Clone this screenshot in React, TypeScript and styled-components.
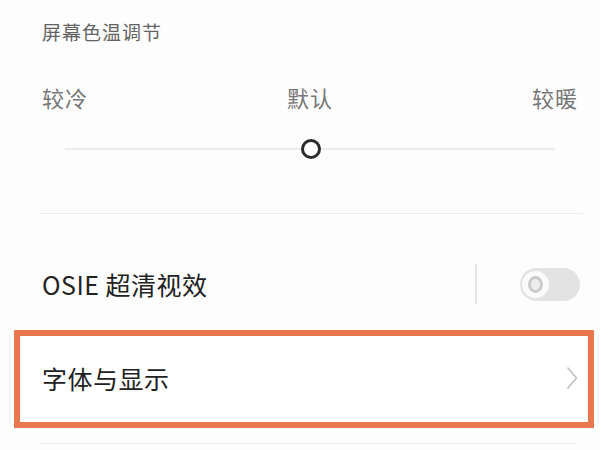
import styled, { createGlobalStyle } from 'styled-components';

const GlobalStyle = createGlobalStyle`
  html, body {
    margin: 0;
    padding: 0;
    background: #fdfdfd;
  }
  body {
    font-family: 'Noto Sans CJK SC', 'Noto Sans', sans-serif;
  }
`;

const Page = styled.div`
  width: 600px;
  height: 450px;
  overflow: hidden;
  background: #fdfdfd;
  display: flex;
  flex-direction: column;
`;

const TempSection = styled.section`
  display: flex;
  flex-direction: column;
  padding: 18px 22px 0 42px;
`;

const SectionTitle = styled.div`
  font-size: 19px;
  line-height: 28px;
  letter-spacing: 1px;
  color: #636363;
`;

const LabelRow = styled.div`
  margin-top: 36px;
  display: flex;
  justify-content: space-between;
  align-items: center;
`;

const Label = styled.span`
  font-size: 22px;
  line-height: 30px;
  letter-spacing: 1px;
  color: #777;
`;

const SliderTrack = styled.div`
  margin: 25px 23px 0 23px;
  height: 24px;
  display: flex;
  align-items: center;
  justify-content: center;
  background: linear-gradient(#ececec, #ececec) center / 100% 2px no-repeat;
`;

const Knob = styled.div`
  width: 14px;
  height: 14px;
  border-radius: 50%;
  border: 3.5px solid #2b2b2b;
  background: #fff;
  margin-left: 2px;
`;

const Divider = styled.div<{ $top: number; $right: number }>`
  height: 1px;
  background: #ececec;
  margin: ${(p) => p.$top}px ${(p) => p.$right}px 0 40px;
`;

const SwitchRow = styled.div`
  margin-top: 40px;
  height: 60px;
  display: flex;
  align-items: center;
  padding: 0 20px 0 42px;
`;

const RowText = styled.span`
  flex: 1;
  font-size: 25px;
  letter-spacing: 0.5px;
  color: #222;
`;

const VSep = styled.div`
  width: 2px;
  height: 40px;
  background: #e6e6e6;
  margin-right: 43px;
`;

const Toggle = styled.div`
  width: 60px;
  height: 33px;
  border-radius: 17px;
  background: #e3e3e3;
  display: flex;
  align-items: center;
  padding-left: 2px;
  box-sizing: border-box;
`;

const ToggleKnob = styled.div`
  width: 27px;
  height: 27px;
  border-radius: 50%;
  background: #fbfbfb;
  display: flex;
  align-items: center;
  justify-content: center;
`;

const ToggleDot = styled.div`
  width: 9px;
  height: 11px;
  border-radius: 50%;
  border: 3px solid #cbcbcb;
  background: #ededed;
`;

const Highlight = styled.div`
  margin: 16px 6px 0 14px;
  height: 98px;
  box-sizing: border-box;
  border: 6px solid #e8774d;
  display: flex;
  align-items: center;
  padding: 0 10px 2px 22px;
  background: #fff;
`;

export default function App() {
  return (
    <Page>
      <GlobalStyle />
      <TempSection>
        <SectionTitle>屏幕色温调节</SectionTitle>
        <LabelRow>
          <Label>较冷</Label>
          <Label>默认</Label>
          <Label>较暖</Label>
        </LabelRow>
        <SliderTrack>
          <Knob />
        </SliderTrack>
      </TempSection>
      <Divider $top={52} $right={17} />
      <SwitchRow>
        <RowText>OSIE 超清视效</RowText>
        <VSep />
        <Toggle>
          <ToggleKnob>
            <ToggleDot />
          </ToggleKnob>
        </Toggle>
      </SwitchRow>
      <Highlight>
        <RowText>字体与显示</RowText>
        <svg width="12" height="24" viewBox="0 0 12 24" fill="none">
          <path d="M1.5 1.5 L10.5 12 L1.5 22.5" stroke="#bdbdbd" strokeWidth="1.5" />
        </svg>
      </Highlight>
      <Divider $top={15} $right={24} />
    </Page>
  );
}
